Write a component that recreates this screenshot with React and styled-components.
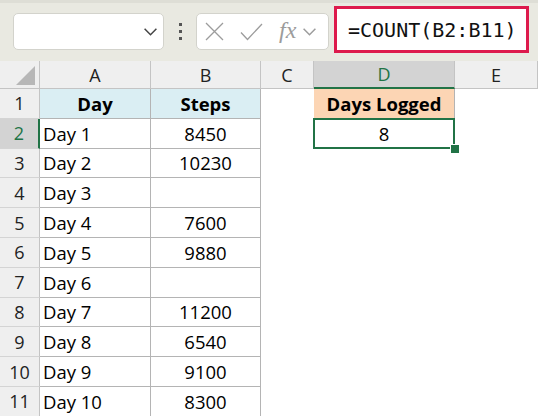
import React from "react";
import styled, { createGlobalStyle } from "styled-components";

const GREEN = "#217346";
const TABLE_LINE = "#b4b4b4";

const columns = [
  { key: "A", width: "111px" },
  { key: "B", width: "110px" },
  { key: "C", width: "53px" },
  { key: "D", width: "141px" },
  { key: "E", width: "1fr" },
];

const steps = [
  ["Day 1", "8450"],
  ["Day 2", "10230"],
  ["Day 3", ""],
  ["Day 4", "7600"],
  ["Day 5", "9880"],
  ["Day 6", ""],
  ["Day 7", "11200"],
  ["Day 8", "6540"],
  ["Day 9", "9100"],
  ["Day 10", "8300"],
];

const GlobalStyle = createGlobalStyle`
  html, body {
    margin: 0;
    padding: 0;
    background: #ffffff;
  }
  body {
    width: 538px;
    height: 416px;
    overflow: hidden;
    font-family: "Open Sans", "Noto Sans", sans-serif;
  }
`;

const ChevronDown = ({ color = "#444", size = 15 }) => (
  <svg width={size} height={size} viewBox="0 0 14 14" fill="none">
    <path d="M1.5 4.5 L7 10 L12.5 4.5" stroke={color} strokeWidth="1.4" />
  </svg>
);

const CrossIcon = () => (
  <svg width="19" height="19" viewBox="0 0 19 19" fill="none">
    <path d="M1 1 L18 18 M18 1 L1 18" stroke="#9c9c9c" strokeWidth="1.3" />
  </svg>
);

const CheckIcon = () => (
  <svg width="23" height="18" viewBox="0 0 23 18" fill="none">
    <path d="M1 9.5 L7.5 16.5 L22 1" stroke="#9c9c9c" strokeWidth="1.3" />
  </svg>
);

const CornerTriangle = () => (
  <svg width="19" height="19" viewBox="0 0 19 19">
    <polygon points="19,0 19,19 0,19" fill="#b7b7b7" />
  </svg>
);

const App = () => {
  return (
    <>
      <GlobalStyle />
      <Page>
        <Toolbar>
          <NameBox>
            <ChevronDown />
          </NameBox>
          <Dots>
            <span />
            <span />
            <span />
          </Dots>
          <FxBox>
            <CrossIcon />
            <CheckIcon />
            <FxLabel>fx</FxLabel>
            <ChevronDown color="#9c9c9c" />
          </FxBox>
          <FormulaBox>=COUNT(B2:B11)</FormulaBox>
        </Toolbar>

        <Sheet>
          <Corner>
            <CornerTriangle />
          </Corner>
          {columns.map((c) => (
            <ColHeader key={c.key} $active={c.key === "D"}>
              {c.key}
            </ColHeader>
          ))}

          <RowHeader>1</RowHeader>
          <Cell $fill="#daeef3" $bold $align="center" $bordered>
            Day
          </Cell>
          <Cell $fill="#daeef3" $bold $align="center" $bordered>
            Steps
          </Cell>
          <Cell />
          <Cell $fill="#fcd5b4" $bold $align="center" $bordered>
            Days Logged
          </Cell>
          <Cell />

          {steps.map(([day, count], i) => {
            const rowNo = i + 2;
            const active = rowNo === 2;
            return (
              <React.Fragment key={day}>
                <RowHeader $active={active}>{rowNo}</RowHeader>
                <Cell $bordered>{day}</Cell>
                <Cell $align="center" $bordered>
                  {count}
                </Cell>
                <Cell />
                {active ? (
                  <Cell $align="center">
                    8
                    <Selection>
                      <FillHandle />
                    </Selection>
                  </Cell>
                ) : (
                  <Cell />
                )}
                <Cell />
              </React.Fragment>
            );
          })}
        </Sheet>
      </Page>
    </>
  );
};

export default App;

const Page = styled.div`
  width: 538px;
  height: 416px;
  overflow: hidden;
  display: flex;
  flex-direction: column;
`;

const Toolbar = styled.div`
  box-sizing: border-box;
  height: 61px;
  flex: 0 0 61px;
  display: flex;
  align-items: flex-start;
  padding: 13px 0 0 13px;
  background: #e9e9e1;
  border-top: 3px solid #deded6;
`;

const NameBox = styled.div`
  box-sizing: border-box;
  width: 151px;
  height: 37px;
  margin-top: -3px;
  background: #ffffff;
  border: 1px solid #d3d3cc;
  border-radius: 5px;
  display: flex;
  align-items: center;
  justify-content: flex-end;
  padding-right: 5px;
`;

const Dots = styled.div`
  width: 32px;
  height: 37px;
  margin-top: -3px;
  display: flex;
  flex-direction: column;
  align-items: center;
  justify-content: center;
  gap: 4px;

  span {
    width: 3px;
    height: 3px;
    background: #555555;
  }
`;

const FxBox = styled.div`
  box-sizing: border-box;
  width: 133px;
  height: 37px;
  margin-top: -3px;
  background: #ffffff;
  border: 1px solid #d3d3cc;
  border-radius: 5px;
  display: flex;
  align-items: center;
  padding-left: 8px;

  svg:nth-child(2) {
    margin-left: 16px;
  }
  svg:last-child {
    margin-left: 6px;
  }
`;

const FxLabel = styled.span`
  font-family: "Liberation Serif", serif;
  font-style: italic;
  font-size: 24px;
  line-height: 1;
  color: #9c9c9c;
  margin-left: 16px;
  margin-top: -4px;
`;

const FormulaBox = styled.div`
  box-sizing: border-box;
  width: 195px;
  height: 47px;
  margin: -10px 0 0 5px;
  background: #ffffff;
  border: 3px solid #dd1a4c;
  display: flex;
  align-items: center;
  padding-left: 11px;
  font-family: "DejaVu Sans Mono", "Liberation Mono", monospace;
  font-size: 20px;
  color: #111111;
`;

const Sheet = styled.div`
  display: grid;
  grid-template-columns: 40px ${columns.map((c) => c.width).join(" ")};
  grid-template-rows: 28px;
  grid-auto-rows: 29.8px;
  background: #ffffff;
`;

const Corner = styled.div`
  box-sizing: border-box;
  background: #efefef;
  border-right: 1px solid #c4c4c4;
  border-bottom: 1px solid #c4c4c4;
  display: flex;
  align-items: flex-end;
  justify-content: flex-end;
  padding: 0 4px 3px 0;
`;

const ColHeader = styled.div`
  box-sizing: border-box;
  display: flex;
  align-items: center;
  justify-content: center;
  font-size: 18px;
  color: ${(p) => (p.$active ? GREEN : "#222222")};
  background: ${(p) => (p.$active ? "#d3d3d3" : "#efefef")};
  border-right: 1px solid #c4c4c4;
  border-bottom: ${(p) => (p.$active ? `2px solid ${GREEN}` : "1px solid #c4c4c4")};
`;

const RowHeader = styled.div`
  box-sizing: border-box;
  display: flex;
  align-items: center;
  justify-content: center;
  font-size: 18px;
  color: ${(p) => (p.$active ? GREEN : "#222222")};
  background: ${(p) => (p.$active ? "#d3d3d3" : "#efefef")};
  border-right: ${(p) => (p.$active ? `2px solid ${GREEN}` : "1px solid #c4c4c4")};
  border-bottom: 1px solid #d4d4d4;
`;

const Cell = styled.div`
  position: relative;
  box-sizing: border-box;
  display: flex;
  align-items: center;
  justify-content: ${(p) => (p.$align === "center" ? "center" : "flex-start")};
  padding: 0 3px;
  font-size: 18.5px;
  font-weight: ${(p) => (p.$bold ? 700 : 400)};
  color: #000000;
  white-space: nowrap;
  background: ${(p) => p.$fill || "#ffffff"};
  border-right: 1px solid ${(p) => (p.$bordered ? TABLE_LINE : "transparent")};
  border-bottom: 1px solid ${(p) => (p.$bordered ? TABLE_LINE : "transparent")};
`;

const Selection = styled.div`
  position: absolute;
  z-index: 2;
  left: -1px;
  top: -1px;
  right: -1px;
  bottom: -1px;
  border: 2px solid ${GREEN};
  pointer-events: none;
`;

const FillHandle = styled.div`
  position: absolute;
  right: -6px;
  bottom: -6px;
  width: 8px;
  height: 8px;
  background: ${GREEN};
  outline: 1px solid #ffffff;
`;
